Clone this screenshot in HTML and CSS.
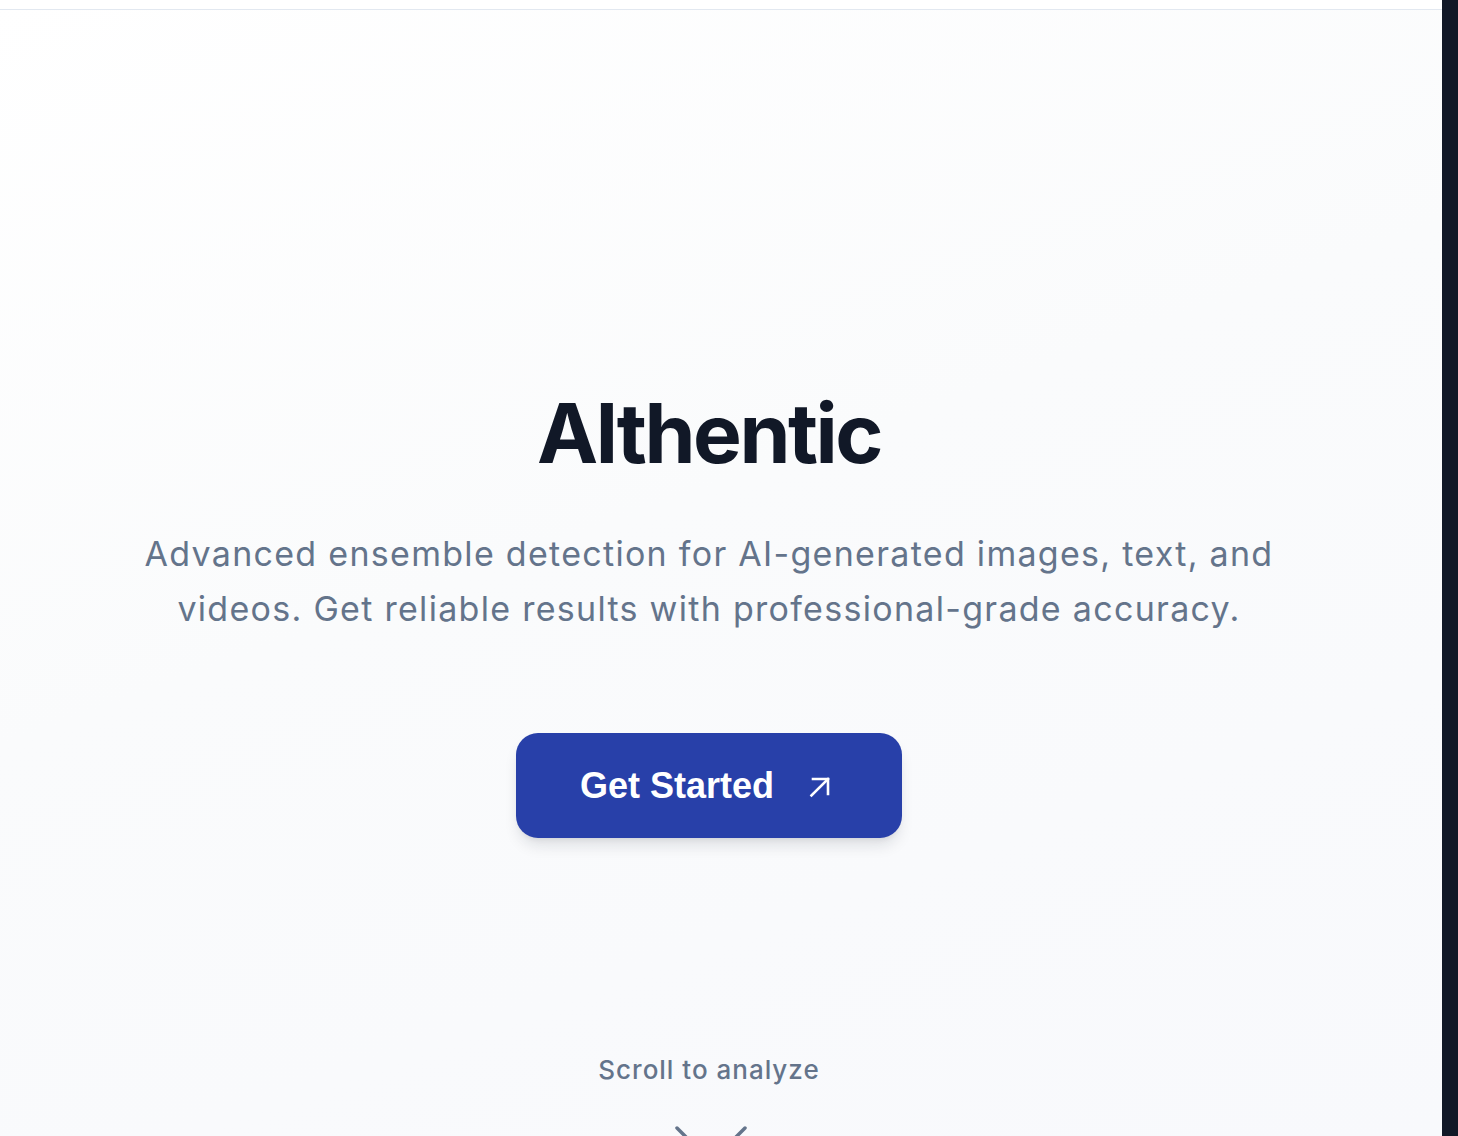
FILE: index.html
```html
<!DOCTYPE html>
<html lang="en">
<head>
<meta charset="utf-8">
<title>Althentic</title>
<link rel="stylesheet" href="styles.css">
</head>
<body>
<div class="app">
  <div class="main">
    <header class="topbar"></header>
    <section class="hero">
      <h1 class="title">Althentic</h1>
      <p class="subtitle">Advanced ensemble detection for AI-generated images, text, and videos. Get reliable results with professional-grade accuracy.</p>
      <button class="cta">
        <span>Get Started</span>
        <svg class="cta-icon" width="22" height="22" viewBox="0 0 22 22" fill="none" stroke="currentColor" stroke-width="2.6" stroke-linecap="square">
          <path d="M2.5 19.5 L19 3"/>
          <path d="M4 3 H19 V18"/>
        </svg>
      </button>
      <div class="scroll-hint">Scroll to analyze</div>
      <svg class="chevron" width="74" height="40" viewBox="0 0 74 40" fill="none" stroke="currentColor" stroke-width="3.5" stroke-linecap="round">
        <path d="M3 3 L37 37 L71 3"/>
      </svg>
    </section>
  </div>
  <aside class="rail"></aside>
</div>
</body>
</html>
```
FILE: styles.css
```css
html, body {
  margin: 0;
  padding: 0;
  height: 100%;
  overflow: hidden;
}
body {
  font-family: Inter, "Noto Sans", sans-serif;
}
.app {
  display: flex;
  height: 1136px;
}
.main {
  flex: 1;
  display: flex;
  flex-direction: column;
  background: linear-gradient(160deg, #ffffff 0%, #fafbfc 45%, #f8f9fc 100%);
  overflow: hidden;
}
.rail {
  width: 16px;
  flex: none;
  background: #111827;
}
.topbar {
  height: 9px;
  background: #ffffff;
  border-bottom: 1px solid #e2e8f0;
  flex: none;
}
.hero {
  display: flex;
  flex-direction: column;
  align-items: center;
  padding: 383px 24px 0 0;
  text-align: center;
}
.title {
  margin: 0;
  font-size: 82px;
  line-height: 82px;
  font-weight: 700;
  letter-spacing: -0.03em;
  color: #111827;
}
.subtitle {
  margin: 51px 0 0;
  max-width: 1180px;
  font-size: 34px;
  line-height: 55px;
  font-weight: 400;
  letter-spacing: 0.038em;
  color: #64748b;
}
.cta {
  margin-top: 97px;
  height: 105px;
  padding: 0 71px 0 64px;
  display: flex;
  align-items: center;
  gap: 35px;
  border: none;
  border-radius: 22px;
  background: #2840a9;
  color: #ffffff;
  font-family: "Liberation Sans", Arial, sans-serif;
  font-weight: 700;
  font-size: 36px;
  box-shadow: 0 10px 15px -3px rgba(15, 23, 42, 0.12), 0 4px 6px -4px rgba(15, 23, 42, 0.1);
  cursor: pointer;
}
.cta-icon {
  display: block;
  margin-top: 2px;
}
.scroll-hint {
  margin-top: 214px;
  font-size: 26px;
  line-height: 36px;
  font-weight: 500;
  letter-spacing: 0.038em;
  color: #64748b;
}
.chevron {
  display: block;
  margin-top: 37px;
  margin-left: 4px;
  color: #64748b;
}
```
